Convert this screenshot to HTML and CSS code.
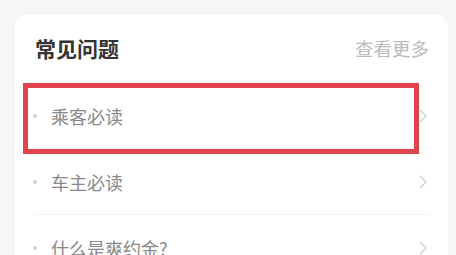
FILE: index.html
```html
<!DOCTYPE html>
<html lang="zh-CN">
<head>
  <meta charset="UTF-8">
  <meta name="viewport" content="width=device-width, initial-scale=1.0">
  <title>常见问题</title>
  <link rel="stylesheet" href="styles.css">
</head>
<body>
  <div class="card">
    <!-- 标题 -->
    <div class="card-header">
      <span class="title">常见问题</span>
      <span class="more">查看更多</span>
    </div>

    <!-- 问题列表 -->
    <ul class="faq-list">
      <li class="faq-item">
        <span class="dot"></span>
        <span class="faq-text">乘客必读</span>
        <svg class="arrow" viewBox="0 0 8 14" width="8" height="14"><path d="M1 1l6 6-6 6" fill="none" stroke="#cfcfcf" stroke-width="1.4"/></svg>
        <div class="highlight"></div>
      </li>
      <li class="faq-item">
        <span class="dot"></span>
        <span class="faq-text">车主必读</span>
        <svg class="arrow" viewBox="0 0 8 14" width="8" height="14"><path d="M1 1l6 6-6 6" fill="none" stroke="#cfcfcf" stroke-width="1.4"/></svg>
      </li>
      <li class="faq-item">
        <span class="dot"></span>
        <span class="faq-text">什么是爽约金?</span>
        <svg class="arrow" viewBox="0 0 8 14" width="8" height="14"><path d="M1 1l6 6-6 6" fill="none" stroke="#cfcfcf" stroke-width="1.4"/></svg>
      </li>
    </ul>
  </div>
</body>
</html>
```

FILE: styles.css
```css
body {
  margin: 0;
  padding: 15px 8px 0 15px;
  background-color: #f5f6f8;
  font-family: "Noto Sans CJK SC", "Noto Sans", sans-serif;
  overflow: hidden;
}

.card {
  background: white;
  border-radius: 12px;
  height: 260px;
}

.card-header {
  display: flex;
  justify-content: space-between;
  align-items: center;
  height: 66px;
  padding: 0 19px 2px 20px;
}

.title {
  font-size: 21px;
  font-weight: bold;
  color: #333;
}

.more {
  font-size: 18.5px;
  color: #bbb;
}

.faq-list {
  list-style-type: none;
  margin: 0;
  padding: 0 20px;
}

.faq-item {
  position: relative;
  display: flex;
  align-items: center;
  height: 65px;
  border-bottom: 1px solid #f2f2f2;
}

.dot {
  width: 4px;
  height: 4px;
  border-radius: 50%;
  background: #d0d0d0;
  margin: 0 14px 0 -2px;
}

.faq-text {
  flex: 1;
  font-size: 18px;
  color: #888;
}

.arrow {
  margin-right: 1px;
}

/* 标注框 */
.highlight {
  position: absolute;
  left: -12px;
  top: 0;
  width: 396px;
  height: 71px;
  box-sizing: border-box;
  border: 5px solid #e1434c;
}
```
